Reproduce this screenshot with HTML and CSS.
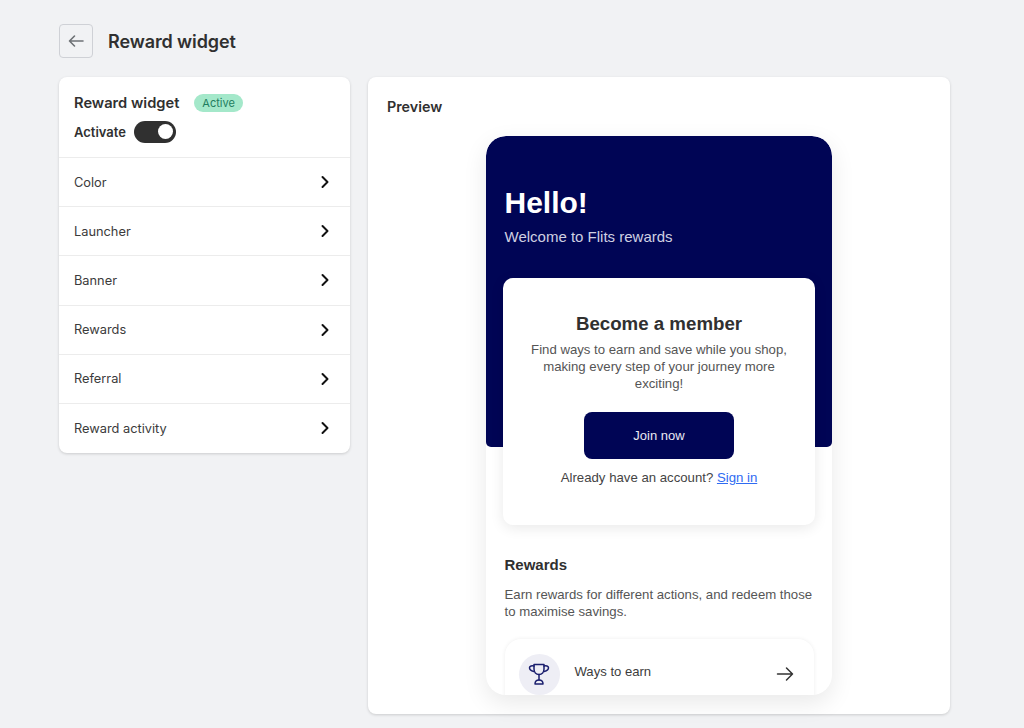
FILE: index.html
```html
<!DOCTYPE html>
<html lang="en">
<head>
    <meta charset="UTF-8">
    <meta name="viewport" content="width=device-width, initial-scale=1.0">
    <title>Reward widget</title>
    <link rel="stylesheet" href="styles.css">
</head>
<body>
    <div class="page-header">
        <button class="back-button" aria-label="Back">
            <svg width="18" height="18" viewBox="0 0 18 18" fill="none" stroke="#6d7175" stroke-width="1.6" stroke-linecap="round" stroke-linejoin="round"><path d="M16 9H2.500M7.500 4 2.500 9l5 5"/></svg>
        </button>
        <h1>Reward widget</h1>
    </div>

    <div class="layout">
        <div class="card settings">
            <div class="settings-head">
                <div class="settings-title">
                    <h2>Reward widget</h2>
                    <span class="badge">Active</span>
                </div>
                <div class="activate">
                    <span>Activate</span>
                    <span class="toggle"><span class="toggle-knob"></span></span>
                </div>
            </div>
            <div class="menu-row"><span>Color</span><svg class="chevron" width="10" height="14" viewBox="0 0 10 14" fill="none" stroke="#111" stroke-width="2" stroke-linecap="round" stroke-linejoin="round"><path d="m2.500 2 5 5-5 5"/></svg></div>
            <div class="menu-row"><span>Launcher</span><svg class="chevron" width="10" height="14" viewBox="0 0 10 14" fill="none" stroke="#111" stroke-width="2" stroke-linecap="round" stroke-linejoin="round"><path d="m2.500 2 5 5-5 5"/></svg></div>
            <div class="menu-row"><span>Banner</span><svg class="chevron" width="10" height="14" viewBox="0 0 10 14" fill="none" stroke="#111" stroke-width="2" stroke-linecap="round" stroke-linejoin="round"><path d="m2.500 2 5 5-5 5"/></svg></div>
            <div class="menu-row"><span>Rewards</span><svg class="chevron" width="10" height="14" viewBox="0 0 10 14" fill="none" stroke="#111" stroke-width="2" stroke-linecap="round" stroke-linejoin="round"><path d="m2.500 2 5 5-5 5"/></svg></div>
            <div class="menu-row"><span>Referral</span><svg class="chevron" width="10" height="14" viewBox="0 0 10 14" fill="none" stroke="#111" stroke-width="2" stroke-linecap="round" stroke-linejoin="round"><path d="m2.500 2 5 5-5 5"/></svg></div>
            <div class="menu-row"><span>Reward activity</span><svg class="chevron" width="10" height="14" viewBox="0 0 10 14" fill="none" stroke="#111" stroke-width="2" stroke-linecap="round" stroke-linejoin="round"><path d="m2.500 2 5 5-5 5"/></svg></div>
        </div>

        <div class="card preview">
            <h2 class="preview-label">Preview</h2>
            <div class="phone">
                <div class="hero">
                    <div class="hero-title">Hello!</div>
                    <div class="hero-sub">Welcome to Flits rewards</div>
                </div>
                <div class="member-card">
                    <h3>Become a member</h3>
                    <p>Find ways to earn and save while you shop, making every step of your journey more exciting!</p>
                    <button class="join-button">Join now</button>
                    <div class="signin">Already have an account? <a href="#">Sign in</a></div>
                </div>
                <div class="rewards">
                    <h3>Rewards</h3>
                    <p>Earn rewards for different actions, and redeem those to maximise savings.</p>
                    <div class="earn-row">
                        <span class="earn-icon">
                            <svg width="24" height="24" viewBox="0 0 24 24" fill="none" stroke="#1b1f6e" stroke-width="1.500" stroke-linecap="round" stroke-linejoin="round"><path d="M7 2.500h10v4.500c0 3.200-2 5.500-5 5.500S7 10.200 7 7V2.500Z"/><path d="M7 4c-2-.6-4.500 0-4.500 1.800 0 1.800 1.800 3 4.300 3.700M17 4c2-.6 4.500 0 4.500 1.800 0 1.800-1.800 3-4.300 3.700"/><path d="M12 12.500v5.500"/><path d="M8 22c0-2.400 1.600-4 4-4s4 1.600 4 4H8Z"/></svg>
                        </span>
                        <span class="earn-text">Ways to earn</span>
                        <svg class="earn-arrow" width="18" height="16" viewBox="0 0 18 16" fill="none" stroke="#333" stroke-width="1.500" stroke-linecap="round" stroke-linejoin="round"><path d="M1.500 8h15M10.500 2l6 6-6 6"/></svg>
                    </div>
                </div>
            </div>
        </div>
    </div>
</body>
</html>
```

FILE: styles.css
```css
* {
    box-sizing: border-box;
}

html, body {
    height: 100%;
}

body {
    margin: 0;
    padding: 24px 74px 14px 59px;
    background-color: #f1f2f4;
    font-family: Inter, "Liberation Sans", sans-serif;
    color: #303030;
    overflow: hidden;
}

h1, h2, h3, p {
    margin: 0;
}

.page-header {
    display: flex;
    align-items: center;
    gap: 15px;
    height: 34px;
    margin-bottom: 19px;
}

.page-header h1 {
    font-size: 18px;
    font-weight: 600;
    letter-spacing: -0.1px;
}

.back-button {
    display: flex;
    align-items: center;
    justify-content: center;
    width: 34px;
    height: 34px;
    padding: 0;
    background: #f1f2f4;
    border: 1px solid #cfd1d6;
    border-radius: 4px;
}

.layout {
    display: flex;
    align-items: flex-start;
    gap: 18px;
}

.card {
    background: white;
    border-radius: 8px;
    box-shadow: 0 1px 3px rgba(0,0,0,0.16);
}

.settings {
    width: 291px;
    flex-shrink: 0;
    padding-bottom: 1px;
}

.settings-head {
    height: 80px;
    padding: 16px 15px 0;
}

.settings-title {
    display: flex;
    align-items: center;
    gap: 15px;
    height: 19px;
}

.settings-title h2 {
    font-size: 14.700px;
    font-weight: 600;
}

.badge {
    padding: 1px 8px;
    font-size: 11px;
    line-height: 16px;
    color: #1e7d5e;
    background: #a4e8ca;
    border-radius: 10px;
}

.activate {
    display: flex;
    align-items: center;
    gap: 8px;
    margin-top: 8.500px;
    font-size: 13px;
    font-weight: 600;
}

.toggle {
    display: flex;
    align-items: center;
    justify-content: flex-end;
    width: 42px;
    height: 22px;
    padding-right: 3px;
    background: #303030;
    border-radius: 11px;
}

.toggle-knob {
    width: 15px;
    height: 15px;
    background: white;
    border-radius: 50%;
}

.menu-row {
    display: flex;
    align-items: center;
    justify-content: space-between;
    height: 49.200px;
    padding: 0 20px 0 15px;
    font-size: 12.800px;
    color: #3b3b3b;
    border-top: 1px solid #ececec;
}

.preview {
    width: 582px;
    height: 637px;
    padding: 21px 0 0;
}

.preview-label {
    margin-left: 19px;
    font-size: 14.300px;
    line-height: 18px;
    font-weight: 600;
}

.phone {
    width: 346px;
    height: 559px;
    margin: 20px 0 0 118px;
    background: white;
    border-radius: 20px;
    box-shadow: 0 8px 24px rgba(0,0,0,0.09);
    overflow: hidden;
    font-family: "Liberation Sans", Arial, sans-serif;
}

.hero {
    height: 311px;
    padding: 50px 18.500px 0;
    color: white;
    background: #000555;
    border-radius: 20px 20px 5px 5px;
}

.hero-title {
    font-size: 30px;
    line-height: 34px;
    font-weight: 700;
}

.hero-sub {
    margin-top: 8px;
    font-size: 15px;
    line-height: 18px;
    color: #cfd0e2;
}

.member-card {
    width: 312px;
    height: 247px;
    margin: -169px 0 0 17px;
    padding: 35px 20px 0;
    position: relative;
    text-align: center;
    background: white;
    border-radius: 10px;
    box-shadow: 0 3px 14px rgba(0,0,0,0.09);
}

.member-card h3 {
    font-size: 18.700px;
    line-height: 22px;
    font-weight: 700;
}

.member-card p {
    margin-top: 6px;
    font-size: 13.200px;
    line-height: 17px;
    color: #555;
}

.join-button {
    display: block;
    width: 150px;
    height: 47px;
    margin: 20px auto 0;
    color: #e9e9f2;
    font-family: inherit;
    font-size: 13px;
    background: #000555;
    border: none;
    border-radius: 8px;
}

.signin {
    margin-top: 10px;
    font-size: 13.200px;
    line-height: 17px;
    color: #444;
}

.signin a {
    color: #2f6bf2;
}

.rewards {
    padding: 31px 18.500px 0;
}

.rewards h3 {
    font-size: 15px;
    line-height: 18px;
    font-weight: 700;
}

.rewards p {
    margin-top: 12px;
    font-size: 13.200px;
    line-height: 17px;
    color: #555;
}

.earn-row {
    display: flex;
    align-items: center;
    width: 309px;
    height: 70px;
    margin-top: 19px;
    padding: 0 20px 0 14px;
    background: white;
    border-radius: 16px;
    box-shadow: 0 0 4px rgba(0,0,0,0.07);
}

.earn-icon {
    display: flex;
    align-items: center;
    justify-content: center;
    width: 41px;
    height: 41px;
    margin-right: 15px;
    background: #eeeef5;
    border-radius: 50%;
}

.earn-text {
    flex: 1;
    margin-top: -5px;
    font-size: 13.100px;
    color: #3c3c3c;
}

.earn-arrow {
    flex-shrink: 0;
}
```
